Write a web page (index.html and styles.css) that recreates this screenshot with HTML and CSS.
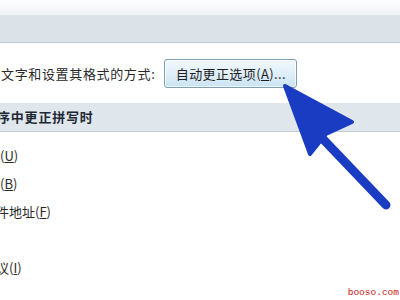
FILE: index.html
```html
<!DOCTYPE html>
<html>
	<head>
		<meta charset="utf-8" />
		<title>校对选项</title>
		<link rel="stylesheet" href="styles.css">
	</head>
	<body>
		<div id="options">
			<div class="top-strip"></div>
			<div class="band"></div>

			<div class="fmt-row">
				<span class="cut">文字和设置其格式的方式:</span>
				<button class="auto-btn">自动更正选项(<u>A</u>)...</button>
			</div>

			<div class="section-head"><span class="cut-head">序中更正拼写时</span></div>

			<ul class="check-list">
				<li>(<u>U</u>)</li>
				<li>(<u>B</u>)</li>
				<li><span class="cut-item">件地址(<u>F</u>)</span></li>
				<li></li>
				<li><span class="cut-item">议(<u>I</u>)</span></li>
			</ul>
		</div>

		<svg class="arrow" width="400" height="300" viewBox="0 0 400 300">
			<line x1="322" y1="138" x2="386" y2="205" stroke="#1a3cc2" stroke-width="9" stroke-linecap="round" />
			<polygon points="285,86 352,122 326,134 310,154" fill="#1a3cc2" stroke="#1a3cc2" stroke-width="4" stroke-linejoin="round" />
		</svg>

		<div class="watermark">booso.com</div>
	</body>
</html>
```

FILE: styles.css
```css
*{
	margin: 0;
	padding: 0;
}

html,body{
	width: 100%;
	height: 100%;
	overflow: hidden;
}

body{
	position: relative;
	background: #fff;
	font-family: "Noto Sans CJK SC", "Noto Sans", sans-serif;
	font-size: 13px;
	color: #2a2a2a;
}

.top-strip{
	height: 15px;
	background: linear-gradient(#fdfdfd, #eef3f6);
}

.band{
	height: 27px;
	background-color: #dbe3e9;
	border-bottom: 1px solid #c4ccd2;
}

.fmt-row{
	display: flex;
	align-items: center;
	height: 59px;
	padding-top: 1px;
}

.fmt-row .cut{
	margin-left: 1px;
	letter-spacing: 0.65px;
}

.auto-btn{
	margin-left: 9px;
	width: 133px;
	height: 29px;
	font-family: inherit;
	font-size: 13px;
	color: #1f1f1f;
	letter-spacing: 0.4px;
	border: 1px solid #7f9fb4;
	border-radius: 3px;
	background: linear-gradient(#f2f8fc, #e0eff8 50%, #c9e3f3);
	box-shadow: inset 0 0 0 1px rgba(255,255,255,0.7);
}

.section-head{
	height: 28px;
	line-height: 28px;
	background-color: #dfe6ec;
	border-bottom: 1px solid #c7ced4;
	font-weight: bold;
	color: #1f2a36;
	overflow: hidden;
	white-space: nowrap;
}

.cut-head{
	display: inline-block;
	margin-left: -3px;
	letter-spacing: 0.8px;
}

.check-list{
	list-style: none;
	padding-top: 10px;
}

.check-list li{
	height: 28px;
	line-height: 28px;
	white-space: nowrap;
	overflow: hidden;
}

.cut-item{
	display: inline-block;
	margin-left: -4px;
}

.arrow{
	position: absolute;
	left: 0;
	top: 0;
}

.watermark{
	position: absolute;
	right: 1px;
	bottom: 2px;
	font-family: "Liberation Mono", monospace;
	font-size: 9.5px;
	color: #cc1111;
}
```
